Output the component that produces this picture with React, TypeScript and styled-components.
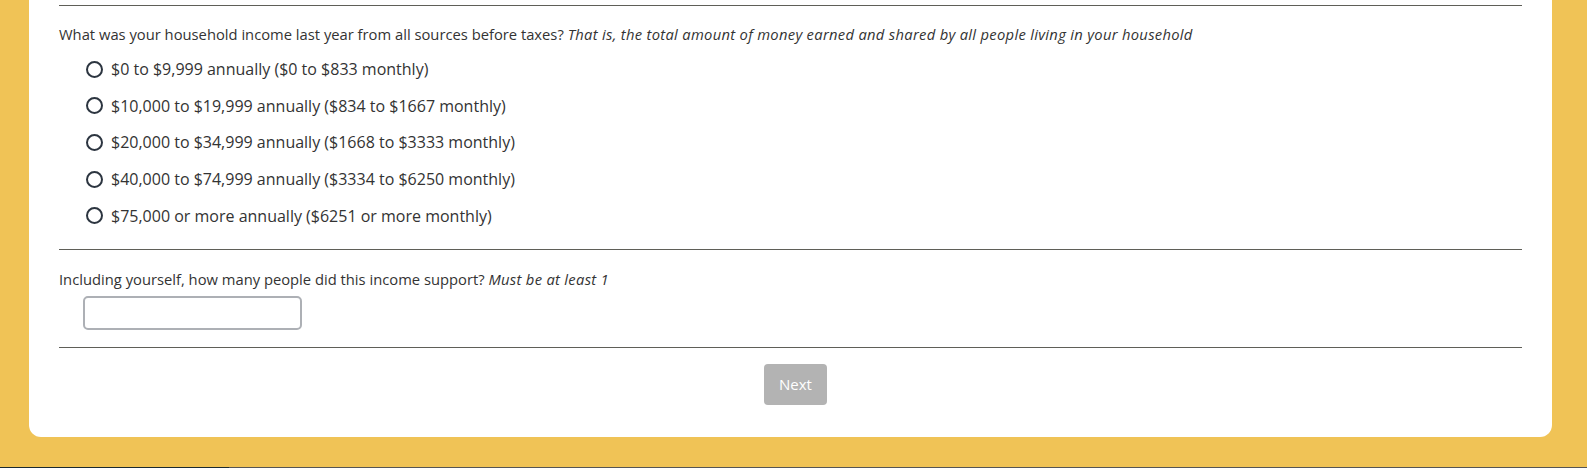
import styled, { createGlobalStyle } from "styled-components";

const GlobalStyle = createGlobalStyle`
  html, body {
    margin: 0;
    padding: 0;
    background: #f0c356;
    font-family: "Open Sans", "Liberation Sans", sans-serif;
    color: #333333;
  }
`;

const incomeOptions = [
  "$0 to $9,999 annually ($0 to $833 monthly)",
  "$10,000 to $19,999 annually ($834 to $1667 monthly)",
  "$20,000 to $34,999 annually ($1668 to $3333 monthly)",
  "$40,000 to $74,999 annually ($3334 to $6250 monthly)",
  "$75,000 or more annually ($6251 or more monthly)",
];

function App() {
  return (
    <>
      <GlobalStyle />
      <Page>
        <Card>
          <Rule />
          <Question>
            What was your household income last year from all sources before taxes?{" "}
            <Hint>
              That is, the total amount of money earned and shared by all people living in your
              household
            </Hint>
          </Question>
          <OptionList>
            {incomeOptions.map((label) => (
              <Option key={label}>
                <Radio type="radio" name="income" />
                {label}
              </Option>
            ))}
          </OptionList>
          <Rule />
          <Question $top={19}>
            Including yourself, how many people did this income support?{" "}
            <Hint>Must be at least 1</Hint>
          </Question>
          <NumberInput type="text" />
          <Rule />
          <Footer>
            <NextButton disabled>Next</NextButton>
          </Footer>
        </Card>
        <BottomEdge />
      </Page>
    </>
  );
}

export default App;

const Page = styled.div`
  display: flex;
  flex-direction: column;
  height: 468px;
  padding: 0 35px 0 29px;
  box-sizing: border-box;
`;

const Card = styled.div`
  display: flex;
  flex-direction: column;
  background: #ffffff;
  border-radius: 0 0 12px 12px;
  padding: 5px 30px 32px;
`;

const Rule = styled.hr`
  margin: 0;
  border: none;
  border-top: 1px solid #5f5f58;
  height: 0;
`;

const Question = styled.p<{ $top?: number }>`
  margin: ${(p) => p.$top ?? 18}px 0 0;
  font-size: 14.75px;
  line-height: 20px;
`;

const Hint = styled.em`
  font-style: italic;
  letter-spacing: 0.3px;
`;

const OptionList = styled.div`
  display: flex;
  flex-direction: column;
  gap: 14.7px;
  margin: 14px 0 22px 27px;
`;

const Option = styled.label`
  display: flex;
  align-items: center;
  gap: 8px;
  font-size: 16px;
  line-height: 22px;
`;

const Radio = styled.input`
  appearance: none;
  flex: 0 0 17px;
  margin: 0;
  width: 17px;
  height: 17px;
  border: 2px solid #2c3540;
  border-radius: 50%;
  box-sizing: border-box;
  background: #ffffff;
`;

const NumberInput = styled.input`
  margin: 7px 0 17px 24px;
  width: 219px;
  height: 34px;
  box-sizing: border-box;
  border: 2px solid #adb0b5;
  border-radius: 5px;
  background: #ffffff;
  font-family: inherit;
  font-size: 15px;
`;

const Footer = styled.div`
  display: flex;
  justify-content: center;
  padding: 16px 0 0 10px;
`;

const NextButton = styled.button`
  width: 63px;
  height: 41px;
  border: none;
  border-radius: 4px;
  background: #b3b3b3;
  color: #ffffff;
  font-family: inherit;
  font-size: 15px;
`;

const BottomEdge = styled.div`
  margin: auto -35px 0 -29px;
  height: 1px;
  background: linear-gradient(to right, #1b2a30 0 229px, #555555 229px);
`;
